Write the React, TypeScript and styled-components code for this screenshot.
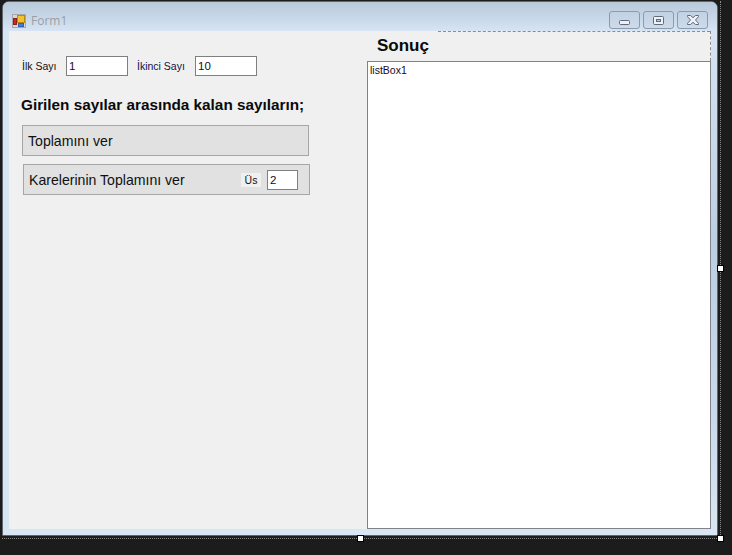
import React from "react";
import styled, { createGlobalStyle } from "styled-components";

const GlobalStyle = createGlobalStyle`
  html, body {
    margin: 0;
    padding: 0;
    background: #1c1c1c;
    overflow: hidden;
  }
  * {
    box-sizing: border-box;
  }
`;

const FormIcon = () => (
  <svg width="14" height="14" viewBox="0 0 14 14">
    <rect x="0.5" y="0.5" width="13" height="13" fill="#d4d8dc" stroke="#a4a8ac" />
    <rect x="5.5" y="1.5" width="7" height="7" fill="#f2c230" stroke="#b98a18" />
    <rect x="1.5" y="4.5" width="3" height="6" fill="#c8281e" stroke="#8c1e18" />
    <rect x="6.5" y="9.5" width="5" height="3" fill="#3f7fe0" stroke="#2e62b8" />
  </svg>
);

const MinIcon = () => (
  <svg width="11" height="5" viewBox="0 0 11 5">
    <rect x="0.5" y="0.5" width="10" height="4" rx="1" fill="#eef1f5" stroke="#5f6b7a" />
  </svg>
);

const MaxIcon = () => (
  <svg width="11" height="9" viewBox="0 0 11 9">
    <rect x="0.5" y="0.5" width="10" height="8" rx="1" fill="#eef1f5" stroke="#5f6b7a" />
    <rect x="3.5" y="3.5" width="4" height="2" fill="#b9cadb" stroke="#5f6b7a" />
  </svg>
);

const CloseIcon = () => (
  <svg width="12" height="10" viewBox="0 0 12 10">
    <path
      d="M0.5 0.5h3l2.5 2.2 2.5-2.2h3v1.2l-3 3.3 3 3.3v1.2h-3l-2.5-2.2-2.5 2.2h-3v-1.2l3-3.3-3-3.3z"
      fill="#eef1f5"
      stroke="#5f6b7a"
    />
  </svg>
);

const App: React.FC = () => {
  return (
    <Canvas>
      <GlobalStyle />
      <Selection>
        <FormWindow>
          <TitleBar>
            <TitleLeft>
              <FormIcon />
              <TitleText>Form1</TitleText>
            </TitleLeft>
            <Controls>
              <ControlButton $low>
                <MinIcon />
              </ControlButton>
              <ControlButton>
                <MaxIcon />
              </ControlButton>
              <ControlButton>
                <CloseIcon />
              </ControlButton>
            </Controls>
          </TitleBar>
          <Client>
            <LeftPanel>
              <InputRow>
                <SmallLabel $width={44}>İlk Sayı</SmallLabel>
                <TextBox $width={62} readOnly value="1" />
                <SmallLabel $width={58} $gap={9} $color="#10104a">
                  İkinci Sayı
                </SmallLabel>
                <TextBox $width={62} readOnly value="10" />
              </InputRow>
              <Heading>Girilen sayılar arasında kalan sayıların;</Heading>
              <ActionPanel $offset={13}>
                <ActionText>Toplamını ver</ActionText>
              </ActionPanel>
              <ActionPanel $offset={14}>
                <ActionText>Karelerinin Toplamını ver</ActionText>
                <PowerGroup>
                  <PowerLabel>Üs</PowerLabel>
                  <TextBox $width={31} readOnly value="2" />
                </PowerGroup>
              </ActionPanel>
            </LeftPanel>
            <RightPanel>
              <ResultHeader>
                <ResultTitle>Sonuç</ResultTitle>
              </ResultHeader>
              <ListBox>listBox1</ListBox>
            </RightPanel>
          </Client>
        </FormWindow>
        <Handle $x={357} $y={535} />
        <Handle $x={717} $y={265} />
        <Handle $x={717} $y={535} />
      </Selection>
    </Canvas>
  );
};

const Canvas = styled.div`
  width: 732px;
  height: 555px;
  padding: 1px 0 0 2px;
  background: #1c1c1c;
  font-family: "Liberation Sans", Arial, sans-serif;
`;

const Selection = styled.div`
  width: 719px;
  height: 538px;
  border-right: 1px dotted #8a8a8a;
  border-bottom: 1px dotted #8a8a8a;
`;

const FormWindow = styled.div`
  width: 716px;
  height: 535px;
  display: flex;
  flex-direction: column;
  padding: 0 6px 6px;
  border-radius: 7px 7px 0 0;
  border: 1px solid #5d6670;
  background:
    linear-gradient(to right, #d8e5f3 0, #d8e5f3 7px, transparent 7px),
    linear-gradient(to bottom, #b8c9da 0, #d6e4f3 30px, #bccfe1 45%, #c6d8ea 75%, #d9e6f4 100%);
`;

const TitleBar = styled.div`
  height: 29px;
  flex: none;
  display: flex;
  align-items: flex-start;
  justify-content: space-between;
  margin: 0 -6px;
  padding: 9px 9px 0 9px;
  background: linear-gradient(to bottom, #b8c9da, #d6e4f3);
  border-radius: 6px 6px 0 0;
`;

const TitleLeft = styled.div`
  display: flex;
  align-items: center;
  gap: 5px;
  padding-top: 1px;
`;

const TitleText = styled.span`
  font-family: "Open Sans", sans-serif;
  font-size: 12px;
  color: #9a9fa6;
`;

const Controls = styled.div`
  display: flex;
  gap: 3px;
`;

const ControlButton = styled.div<{ $low?: boolean }>`
  width: 31px;
  height: 18px;
  display: flex;
  align-items: ${(p) => (p.$low ? "flex-end" : "center")};
  justify-content: center;
  padding-bottom: ${(p) => (p.$low ? "3px" : "0")};
  border: 1px solid #8a9bb0;
  border-radius: 3px;
  background: linear-gradient(to bottom, #c3d2e2, #ccdaea);
`;

const Client = styled.div`
  flex: 1;
  display: flex;
  background: #f0f0f0;
`;

const LeftPanel = styled.div`
  width: 358px;
  flex: none;
  display: flex;
  flex-direction: column;
`;

const InputRow = styled.div`
  display: flex;
  align-items: center;
  margin: 25px 0 0 13px;
`;

const SmallLabel = styled.span<{ $width: number; $gap?: number; $color?: string }>`
  width: ${(p) => p.$width}px;
  margin-left: ${(p) => p.$gap || 0}px;
  font-size: 10.5px;
  color: ${(p) => p.$color || "#101010"};
`;

const TextBox = styled.input<{ $width: number }>`
  width: ${(p) => p.$width}px;
  height: 20px;
  padding: 0 2px;
  border: 1px solid #7f7f7f;
  background: #fff;
  color: #1a0a1e;
  font-family: "Liberation Sans", Arial, sans-serif;
  font-size: 11.5px;
  outline: none;
`;

const Heading = styled.div`
  margin: 20px 0 11px 12px;
  font-size: 15.3px;
  line-height: 18px;
  font-weight: 700;
  color: #0a0a0a;
  white-space: nowrap;
`;

const ActionPanel = styled.div<{ $offset: number }>`
  width: 287px;
  height: 31px;
  flex: none;
  display: flex;
  align-items: center;
  justify-content: space-between;
  margin: 0 0 8px ${(p) => p.$offset}px;
  padding: 0 11px 0 5px;
  background: #e1e1e1;
  border: 1px solid #a6a6a6;
`;

const ActionText = styled.span`
  font-size: 14.1px;
  padding-top: 1px;
  color: #101010;
`;

const PowerGroup = styled.div`
  display: flex;
  align-items: center;
  gap: 6px;
`;

const PowerLabel = styled.span`
  width: 20px;
  height: 14px;
  display: flex;
  align-items: center;
  justify-content: center;
  background: #f0f0f0;
  font-size: 10.5px;
  color: #101010;
`;

const RightPanel = styled.div`
  flex: 1;
  display: flex;
  flex-direction: column;
`;

const ResultHeader = styled.div`
  height: 30px;
  flex: none;
  position: relative;
  border-right: 1px dashed #8c8c8c;
  background: #f0f0f0;
  padding-left: 10px;

  &::before {
    content: "";
    position: absolute;
    top: 0;
    left: 71px;
    right: 0;
    border-top: 1px dashed #8c8c8c;
  }
`;

const ResultTitle = styled.span`
  font-size: 17px;
  line-height: 30px;
  font-weight: 700;
  color: #0a0a0a;
`;

const ListBox = styled.div`
  flex: 1;
  padding: 2px 2px;
  background: #fff;
  border: 1px solid #82828a;
  font-size: 10.5px;
  line-height: 13px;
  color: #1a0a1e;
`;

const Handle = styled.div<{ $x: number; $y: number }>`
  position: absolute;
  left: ${(p) => p.$x}px;
  top: ${(p) => p.$y}px;
  width: 7px;
  height: 7px;
  background: #fff;
  border: 1px solid #000;
`;

export default App;
